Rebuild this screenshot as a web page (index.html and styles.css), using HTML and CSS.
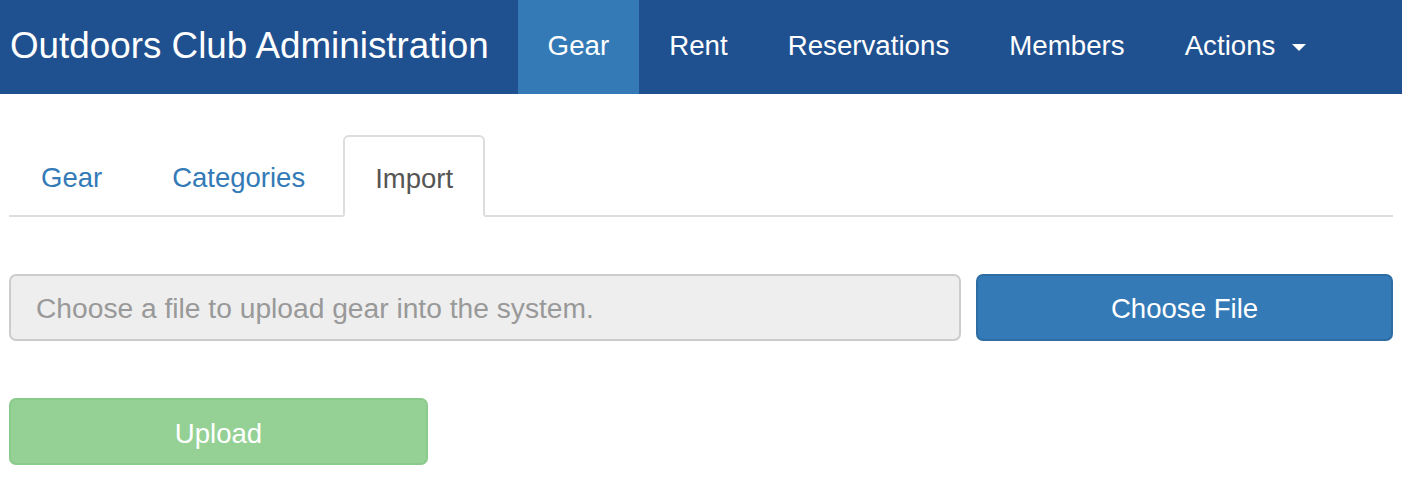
FILE: index.html
```html
<!DOCTYPE html>
<html>
<head>
<meta charset="utf-8">
<link rel="stylesheet" href="styles.css">
</head>
<body>
<nav class="navbar">
  <div class="brand">Outdoors Club Administration</div>
  <ul class="nav">
    <li class="active"><a>Gear</a></li>
    <li><a>Rent</a></li>
    <li><a>Reservations</a></li>
    <li><a>Members</a></li>
    <li><a>Actions <span class="caret"></span></a></li>
  </ul>
</nav>
<main class="page">
  <ul class="tabs">
    <li><a>Gear</a></li>
    <li><a>Categories</a></li>
    <li class="active"><a>Import</a></li>
  </ul>
  <div class="file-row">
    <div class="file-input">Choose a file to upload gear into the system.</div>
    <div class="btn btn-primary">Choose File</div>
  </div>
  <div class="upload-row">
    <div class="btn btn-success">Upload</div>
  </div>
</main>
</body>
</html>
```
FILE: styles.css
```css
* { box-sizing: border-box; }
html, body { margin: 0; padding: 0; background: #fff; }
body {
  font-family: "Liberation Sans", Arial, sans-serif;
  font-size: 27.5px;
  color: #333;
  width: 1402px;
}
ul { list-style: none; margin: 0; padding: 0; }

.navbar {
  display: flex;
  align-items: stretch;
  height: 94px;
  background: #1f5090;
  color: #fff;
}
.brand {
  display: flex;
  align-items: center;
  padding: 0 29px 2px 10px;
  font-size: 36.8px;
}
.nav { display: flex; }
.nav li { display: flex; }
.nav a {
  display: flex;
  align-items: center;
  padding: 0 30px 2px;
  font-size: 27.7px;
  color: #fff;
}
.nav li.active a { background: #337ab7; }
.caret {
  display: inline-block;
  width: 0; height: 0;
  margin-left: 17px;
  margin-top: 3px;
  border-top: 7px solid #fff;
  border-left: 7px solid transparent;
  border-right: 7px solid transparent;
}

.page { padding: 41px 9px 0; }
.tabs {
  display: flex;
  border-bottom: 2px solid #ddd;
}
.tabs li { margin-right: 6px; margin-bottom: -2px; }
.tabs a {
  display: block;
  height: 82px;
  line-height: 84px;
  padding: 0 31px;
  border: 1px solid transparent;
  border-radius: 6px 6px 0 0;
  color: #337ab7;
  font-size: 27.5px;
}
.tabs li.active a {
  color: #555;
  background: #fff;
  border: 2px solid #ddd;
  border-bottom-color: transparent;
  padding: 0 30px;
}

.file-row {
  display: grid;
  grid-template-columns: 952px 1fr;
  column-gap: 15px;
  margin-top: 57px;
}
.file-input {
  height: 67px;
  line-height: 65px;
  padding: 0 25px;
  background: #eee;
  border: 2px solid #ccc;
  border-radius: 7px;
  color: #999;
  font-size: 28.2px;
}
.btn {
  height: 67px;
  line-height: 65px;
  text-align: center;
  border: 2px solid transparent;
  border-radius: 7px;
  color: #fff;
  font-size: 27.6px;
}
.btn-primary { background: #337ab7; border-color: #2e6da4; }
.upload-row { margin-top: 57px; }
.btn-success {
  width: 419px;
  line-height: 67px;
  background: #95d195;
  border-color: #8aca8a;
}
```
